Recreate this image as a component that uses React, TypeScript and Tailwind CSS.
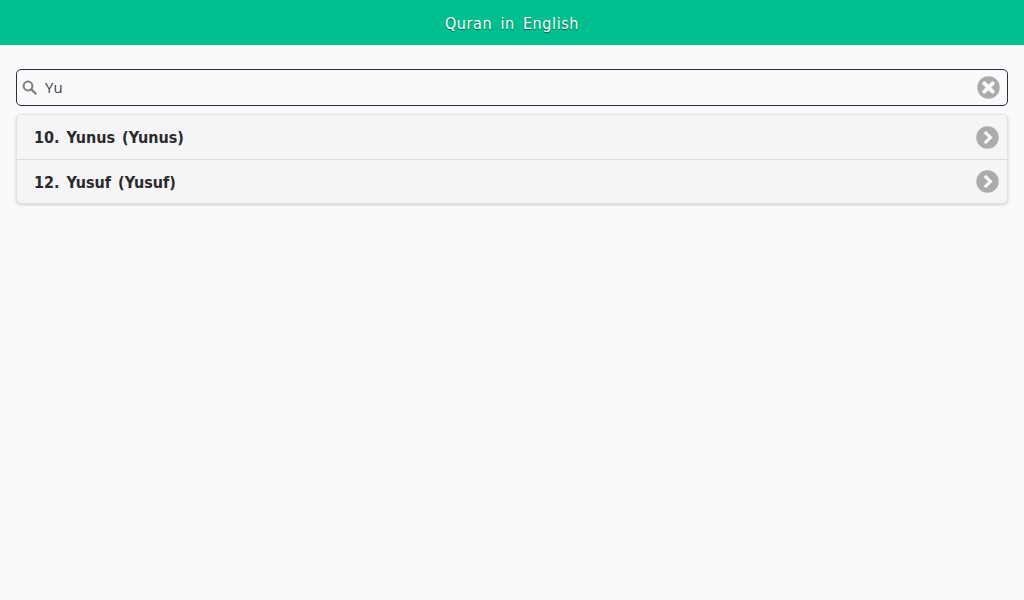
const suras = ["10. Yunus (Yunus)", "12. Yusuf (Yusuf)"];

function CircleIcon({ kind }: { kind: "close" | "next" }) {
  return (
    <svg width="23" height="23" viewBox="0 0 23 23" className="shrink-0">
      <circle cx="11.5" cy="11.5" r="11.2" fill="#ababab" />
      {kind === "close" ? (
        <path d="M7.3 7.3 L15.7 15.7 M15.7 7.3 L7.3 15.7" stroke="#faf9fb" strokeWidth="4" strokeLinecap="round" fill="none" />
      ) : (
        <path d="M8.8 5.8 L14.4 11.5 L8.8 17.2" stroke="#faf9fb" strokeWidth="3.2" fill="none" />
      )}
    </svg>
  );
}

export default function App() {
  return (
    <div className="min-h-screen bg-[#faf9fb] font-['DejaVu_Sans_Condensed','DejaVu_Sans',sans-serif]">
      <header className="h-[45px] pt-[2px] bg-[#00bf8f] flex items-center justify-center text-white text-[16px] tracking-[0.6px] [word-spacing:3px] [text-shadow:0_1px_1px_rgba(0,0,0,0.5)]">
        Quran in English
      </header>

      <div className="px-4 pt-6">
        <div className="h-[37px] flex items-center border border-[#2e2e38] rounded-[5px] bg-[#faf9fb] pl-[5px] pr-[7px]">
          <svg width="15" height="15" viewBox="0 0 15 15" className="shrink-0">
            <circle cx="6" cy="6" r="4.4" stroke="#7d7d7d" strokeWidth="2" fill="none" />
            <path d="M9.5 9.5 L13.5 13.5" stroke="#7d7d7d" strokeWidth="2.4" strokeLinecap="round" />
          </svg>
          <span className="ml-2 flex-1 font-['Open_Sans',sans-serif] text-[15px] text-[#444]">Yu</span>
          <CircleIcon kind="close" />
        </div>

        <ul className="mt-2 rounded-[5px] border border-[#e2e0e2] bg-[#f5f4f6] shadow-[0_1px_3px_rgba(0,0,0,0.18)]">
          {suras.map((s, i) => (
            <li
              key={s}
              className={`h-[44px] flex items-center justify-between pl-[16px] pr-2 ${i > 0 ? "border-t border-[#dddbdd]" : ""}`}
            >
              <span className="pt-[2px] ml-px text-[16px] font-bold text-[#2a2a2a] [word-spacing:2px]">{s}</span>
              <CircleIcon kind="next" />
            </li>
          ))}
        </ul>
      </div>
    </div>
  );
}
